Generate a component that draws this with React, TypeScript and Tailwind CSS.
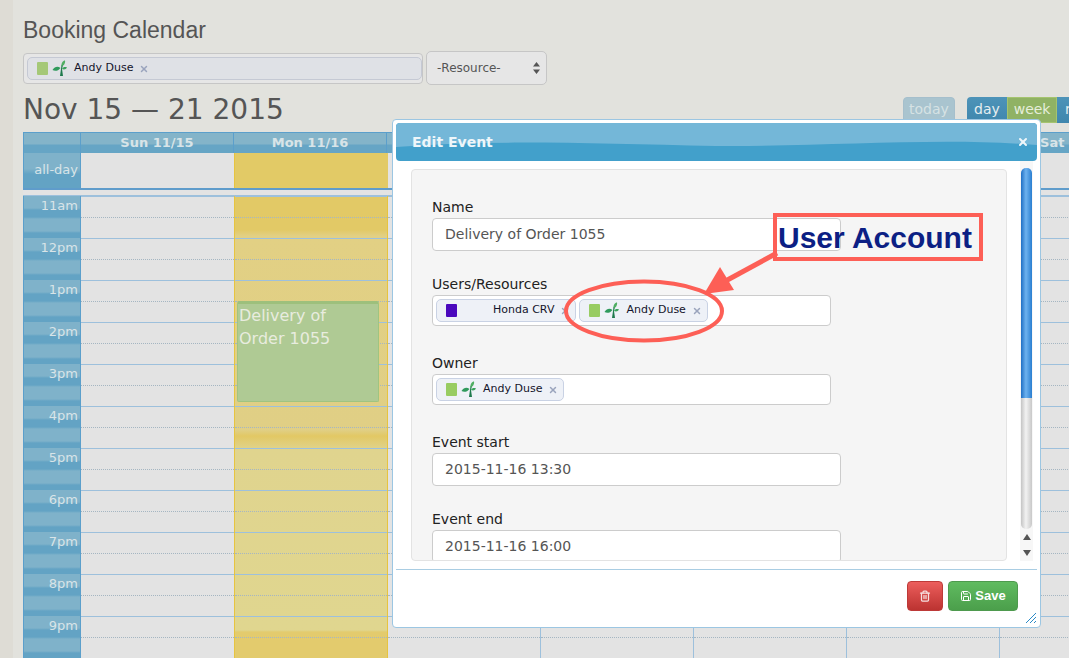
import React from 'react';
import { Trash2, Save, X } from 'lucide-react';

const HOURS = ['11am', '12pm', '1pm', '2pm', '3pm', '4pm', '5pm', '6pm', '7pm', '8pm', '9pm'];
const DAYS = ['Sun 11/15', 'Mon 11/16', 'Tue 11/17', 'Wed 11/18', 'Thu 11/19', 'Fri 11/20', 'Sat 11/21'];

function Tree() {
  return (
    <svg width="15" height="17" viewBox="0 0 15 17" className="shrink-0">
      <path d="M8 16 L11 16 L10 9 L11 5 L9.5 5 L9 9 Z" fill="#1f7a4d" />
      <path d="M0.5 10 C3 6 6 6 8.5 8 C6 11 3 11.5 0.5 10 Z" fill="#2f9a5c" />
      <path d="M9.5 6 C9 3 11 0.5 13 0.5 C13.5 3 12 6 9.5 6 Z" fill="#4fae62" />
      <path d="M10 9 C11 7 13 6.5 15 7.5 C14 9.5 12 10 10 9 Z" fill="#3aa25c" />
    </svg>
  );
}

function Token({ label, color, tree = true, muted = false }: { label: string; color: string; tree?: boolean; muted?: boolean }) {
  return (
    <div className={`flex items-center h-[23px] pl-[9px] pr-[5px] rounded-[5px] border ${muted ? 'bg-[#dfe1e6] border-[#c5c9d4]' : 'bg-[#eef1f7] border-[#c9d2e4]'}`}>
      <span className="w-[11px] h-[13px] rounded-[1px] shrink-0" style={{ backgroundColor: color }} />
      <span className="w-[4px] shrink-0" />
      {tree ? <Tree /> : <span className="w-[15px] shrink-0" />}
      <span className={`ml-[7px] text-[11px] text-[#14142b] whitespace-nowrap ${tree ? '' : 'ml-[17px]'}`}>{label}</span>
      <X size={10} strokeWidth={3.5} className="ml-[6px] text-[#9aa4bd] shrink-0" />
    </div>
  );
}

function Label({ children }: { children: React.ReactNode }) {
  return <div className="h-[20px] leading-[20px] text-[14px] text-[#222]">{children}</div>;
}

function TextField({ value }: { value: string }) {
  return (
    <div className="w-[409px] h-[33px] shrink-0 bg-white border border-[#ccc] rounded-[4px] pl-[12px] flex items-center text-[14px] text-[#555]">
      {value}
    </div>
  );
}

function Slot({ line = 'border-[#9dc0dc]' }: { line?: string }) {
  return (
    <div className={`h-[42px] border-t ${line}`}>
      <div className="h-[21px] border-b border-dotted border-[#a5b6c2]" />
    </div>
  );
}

export default function App() {
  return (
    <div className="relative w-[1069px] h-[658px] overflow-hidden bg-[#e2e2dd] font-['DejaVu_Sans',sans-serif]">
      <div className="flex h-full">
        <div className="w-[13px] shrink-0 bg-[#dedcd5]" />
        <div className="flex-1 pl-[10px] min-w-0">
          <h1 className="h-[51px] pt-[15px] leading-[31px] text-[23px] font-medium text-[#555] font-['Liberation_Sans',sans-serif]">Booking Calendar</h1>

          <div className="flex items-start h-[36px]">
            <div className="mt-[2px] w-[400px] h-[31px] bg-[#e6e6e6] border border-[#c6c6c6] rounded-[4px] pl-[3px] pt-[3px]">
              <Token label="Andy Duse" color="#a5c878" muted />
            </div>
            <div className="ml-[3px] w-[121px] h-[34px] bg-[#e6e6e6] border border-[#c6c6c6] rounded-[5px] pl-[10px] pr-[6px] flex items-center justify-between text-[12px] text-[#555]">
              -Resource-
              <svg width="7" height="12" viewBox="0 0 7 12"><path d="M3.5 0 L7 4.5 H0 Z M3.5 12 L7 7.5 H0 Z" fill="#555" /></svg>
            </div>
          </div>

          <div className="flex items-center h-[45px]">
            <div className="text-[28px] leading-[40px] text-[#555] whitespace-nowrap">Nov 15 — 21 2015</div>
            <div className="ml-auto flex items-center -mr-[38px] w-[204px] shrink-0 overflow-hidden">
              <div className="w-[56px] h-[26px] rounded-[4px] bg-[#a9c4cf] border border-[#a5bfcc] text-[14px] text-[#d6e2e4] flex items-center justify-center">today</div>
              <div className="ml-[12px] w-[44px] h-[26px] rounded-l-[4px] bg-[linear-gradient(#4d93b8,#3f86ad)] text-[14px] text-[#e6eef0] flex items-center justify-center">day</div>
              <div className="w-[54px] h-[26px] bg-[#90b264] border border-[#a5c46f] text-[14px] text-[#e6eedb] flex items-center justify-center">week</div>
              <div className="w-[50px] h-[26px] shrink-0 bg-[linear-gradient(#4d93b8,#3f86ad)] text-[14px] text-[#e6eef0] pl-[8px] flex items-center">month</div>
            </div>
          </div>

          <div className="w-[1100px]">
            <div className="flex h-[21px] border-t border-[#5b9fcb] bg-[linear-gradient(#84b4c9_0%,#84b4c9_55%,#66a5c5_60%,#66a5c5_100%)]">
              <div className="w-[58px] shrink-0 border-l border-r border-[#5b9fcb]" />
              {DAYS.map((d) => (
                <div key={d} className="w-[153px] shrink-0 border-r border-[#5b9fcb] text-center text-[13px] leading-[20px] font-bold text-[#d8e4e8]">{d}</div>
              ))}
            </div>

            <div className="flex h-[35px]">
              <div className="w-[58px] shrink-0 border-l border-r border-[#5b9fcb] bg-[linear-gradient(#7fb2ca_0%,#7fb2ca_45%,#63a3c4_60%,#63a3c4_100%)] text-right pr-[2px] pt-[8px] text-[13px] leading-[18px] text-[#d8e4e8]">all-day</div>
              <div className="w-[153px] shrink-0 bg-[#e3e3e3]" />
              <div className="w-[154px] shrink-0 bg-[#e2ca66] border-l border-[#e7c43f]" />
              <div className="flex-1 bg-[#e3e3e3]" />
            </div>

            <div className="h-[8px] border-t-2 border-b border-t-[#5f9ccb] border-b-[#9dc0dc] bg-[#e3e3e3] box-border" />

            <div className="flex">
              <div className="w-[58px] shrink-0 border-l border-r border-[#5b9fcb]">
                {HOURS.map((h) => (
                  <div key={h} className="h-[42px] pr-[2px] text-right text-[13px] leading-[20px] text-[#d8e4e8] bg-[linear-gradient(#7fb2ca_0px,#7fb2ca_12px,#63a3c4_14px,#63a3c4_21px,#7fb2ca_23px,#7fb2ca_35px,#63a3c4_37px,#63a3c4_42px)]">{h}</div>
                ))}
              </div>
              <div className="w-[153px] shrink-0 bg-[#e3e3e3]">
                {HOURS.map((h) => <Slot key={h} />)}
              </div>
              <div className="relative w-[154px] shrink-0 border-l border-r border-[#e7c43f] bg-[linear-gradient(#e2c966_0px,#e2c966_34px,#e2d084_40px,#e0cf85_234px,#e2c864_240px,#e0d48e_254px,#e0d68f_434px,#e3cb6d_436px)]">
                {HOURS.map((h) => <Slot key={h} />)}
                <div className="absolute left-[2px] top-[105px] w-[142px] h-[101px] rounded-[2px] border border-[#a0c480] border-t-[3px] border-t-[#9dc07c] bg-[#afca94] pl-[1px] text-[16px] leading-[23px] text-[#e8ecdf]">
                  Delivery of<br />Order 1055
                </div>
              </div>
              {[0, 1, 2, 3, 4].map((i) => (
                <div key={i} className="w-[153px] shrink-0 border-r border-[#9dc0dc] bg-[#e3e3e3]">
                  {HOURS.map((h) => <Slot key={h} />)}
                </div>
              ))}
            </div>
          </div>
        </div>
      </div>

      {/* Edit Event dialog */}
      <div className="absolute left-[392px] top-[119px] w-[649px] h-[509px] bg-white border border-[#9cc6e2] rounded-[4px] p-[3px] flex flex-col">
        <div className="relative h-[38px] shrink-0 rounded-[4px] overflow-hidden bg-[#42a0cb] flex items-center pl-[16px] pr-[8px]">
          <svg className="absolute inset-0" width="641" height="38" viewBox="0 0 641 38" preserveAspectRatio="none">
            <path d="M0 0 H641 V22 C540 14 430 24 320 23 C200 21 100 16 0 24 Z" fill="#74b7d8" />
          </svg>
          <span className="relative text-[14px] font-bold text-[#eef6fa]">Edit Event</span>
          <X size={12} strokeWidth={4} className="relative ml-auto text-[#eef6fa]" />
        </div>

        <div className="flex h-[400px] shrink-0">
          <div className="flex-1 min-w-0 pl-[15px] pt-[8px] overflow-hidden">
            <div className="w-[596px] h-[392px] overflow-hidden bg-[#f5f5f5] border border-[#e3e3e3] rounded-[4px] pl-[20px] pt-[27px] flex flex-col">
              <Label>Name</Label>
              <div className="h-[1px] shrink-0" />
              <TextField value="Delivery of Order 1055" />
              <div className="h-[23px] shrink-0" />
              <Label>Users/Resources</Label>
              <div className="h-[1px] shrink-0" />
              <div className="w-[399px] h-[31px] shrink-0 bg-white border border-[#ccc] rounded-[4px] pl-[3px] pt-[3px] flex gap-[3px]">
                <Token label="Honda CRV" color="#4a08bd" tree={false} />
                <Token label="Andy Duse" color="#98cc62" />
              </div>
              <div className="h-[27px] shrink-0" />
              <Label>Owner</Label>
              <div className="h-[1px] shrink-0" />
              <div className="w-[399px] h-[31px] shrink-0 bg-white border border-[#ccc] rounded-[4px] pl-[3px] pt-[3px] flex">
                <Token label="Andy Duse" color="#98cc62" />
              </div>
              <div className="h-[27px] shrink-0" />
              <Label>Event start</Label>
              <div className="h-[1px] shrink-0" />
              <TextField value="2015-11-16 13:30" />
              <div className="h-[23px] shrink-0" />
              <Label>Event end</Label>
              <div className="h-[1px] shrink-0" />
              <TextField value="2015-11-16 16:00" />
            </div>
          </div>
          <div className="w-[13px] shrink-0 flex flex-col bg-[#f7f7f7] mr-[4px]">
            <div className="h-[7px]" />
            <div className="h-[230px] mx-[1px] rounded-t-[5px] bg-[linear-gradient(90deg,#1f6fc4,#6db2ef_45%,#2a7ed0)]" />
            <div className="h-[131px] mx-[1px] rounded-b-[5px] bg-[linear-gradient(90deg,#c4c4c4,#f2f2f2_45%,#c8c8c8)]" />
            <div className="flex-1 flex flex-col items-center justify-around text-[#555]">
              <svg width="8" height="6" viewBox="0 0 8 6"><path d="M4 0 L8 6 H0 Z" fill="#555" /></svg>
              <svg width="8" height="6" viewBox="0 0 8 6"><path d="M4 6 L8 0 H0 Z" fill="#555" /></svg>
            </div>
          </div>
        </div>

        <div className="relative flex-1 mt-[8px] border-t border-[#a9cde3] flex justify-end gap-[5px] pt-[11px] pr-[19px]">
          <div className="w-[36px] h-[30px] rounded-[4px] border border-[#bd3a38] bg-[linear-gradient(#ec5e5c,#bc3331)] text-[#f5e0e0] flex items-center justify-center">
            <Trash2 size={12} strokeWidth={2.5} />
          </div>
          <div className="w-[70px] h-[30px] rounded-[4px] border border-[#4e9a4e] bg-[linear-gradient(#60bb60,#4b9f4b)] text-white flex items-center justify-center gap-[3px] text-[13px] font-bold font-['Liberation_Sans',sans-serif]">
            <Save size={12} />
            Save
          </div>
          <svg className="absolute right-0 bottom-0" width="12" height="12" viewBox="0 0 12 12">
            <path d="M1 11 L11 1 M5 11 L11 5 M9 11 L11 9" stroke="#2b8ac6" strokeWidth="1" />
          </svg>
        </div>
      </div>

      {/* Annotation over the dialog */}
      <div className="absolute left-[773px] top-[213px] w-[210px] h-[48px] border-[4px] border-[#fd5f56] flex items-center pl-[1px] font-['Liberation_Sans',sans-serif] font-bold text-[30px] text-[#0c1f84] whitespace-nowrap">
        User Account
      </div>
      <svg className="absolute left-[560px] top-[250px]" width="230" height="100" viewBox="0 0 230 100">
        <ellipse cx="84" cy="61" rx="78" ry="29.5" fill="none" stroke="#fd5f56" strokeWidth="4" />
        <path d="M217 3 L160 34" stroke="#fd5f56" strokeWidth="5" />
        <path d="M144 44 L174 40 L160 17 Z" fill="#fd5f56" />
      </svg>
    </div>
  );
}
